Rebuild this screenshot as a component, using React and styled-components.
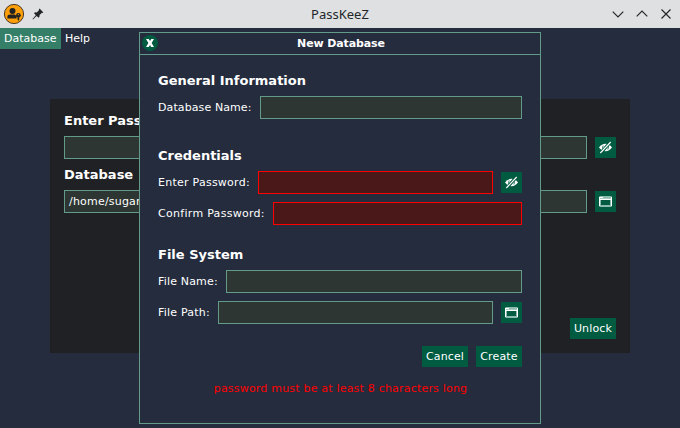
import React from "react";
import styled, { createGlobalStyle } from "styled-components";

const GlobalStyle = createGlobalStyle`
  * { box-sizing: border-box; }
  body {
    margin: 0;
    background: #242c3e;
    color: #fff;
    font: 11px/13px "DejaVu Sans", Verdana, sans-serif;
    overflow: hidden;
  }
`;

const Window = styled.div`
  position: relative;
  display: flex;
  flex-direction: column;
  width: 680px;
  height: 428px;
  background: #242c3e;
`;

const TitleBar = styled.header`
  display: grid;
  grid-template-columns: 1fr auto 1fr;
  align-items: center;
  height: 28px;
  padding: 0 7px 0 3px;
  background: #dee0e2;
  color: #232629;
`;

const TitleText = styled.span`
  margin-left: 4px;
  font: 13px/16px "Noto Sans", sans-serif;
`;

const TitleLeft = styled.div`
  display: flex;
  align-items: center;
  gap: 7px;
`;

const WindowControls = styled.div`
  display: flex;
  justify-content: flex-end;
  gap: 10px;
`;

const Icon = styled.svg`
  display: block;
  flex: none;
  width: ${(p) => p.$w}px;
  height: ${(p) => p.$h || p.$w}px;
`;

const MenuBar = styled.nav`
  display: flex;
  height: 21px;
`;

const MenuItem = styled.div`
  height: 21px;
  padding: 4px;
  white-space: nowrap;
  background: ${(p) => (p.$active ? "#357f69" : "transparent")};

  &:first-child { width: 61px; }
`;

const Panel = styled.main`
  display: flex;
  flex-direction: column;
  width: 580px;
  height: 254px;
  margin: 50px auto 0;
  padding: 14px 14px 14px;
  background: #202124;
`;

const Heading = styled.h2`
  margin: 0;
  height: 16px;
  font-size: 13px;
  line-height: 16px;
  font-weight: bold;
  white-space: nowrap;
`;

const Row = styled.div`
  display: flex;
  align-items: center;
  gap: 8px;
  height: 23px;
  margin-top: ${(p) => p.$top || 0}px;
  margin-bottom: ${(p) => p.$bottom || 0}px;
`;

const Label = styled.label`
  flex: none;
  width: ${(p) => p.$width}px;
  white-space: nowrap;
  letter-spacing: ${(p) => p.$spacing || 0}px;
`;

const Field = styled.div`
  flex: 1;
  height: 23px;
  padding: 4px;
  letter-spacing: 0.2px;
  background: ${(p) => (p.$invalid ? "#4a1818" : "#2d3632")};
  border: 1px solid ${(p) => (p.$invalid ? "#ff0000" : "#639b8a")};
`;

const Button = styled.button`
  width: 46px;
  height: 21px;
  padding: 0;
  border: 0;
  background: #005b41;
  color: #fff;
  font: inherit;
  letter-spacing: 0.15px;
  white-space: nowrap;
`;

const IconButton = styled(Button)`
  display: flex;
  align-items: center;
  justify-content: center;
  flex: none;
  width: 21px;
`;

const PanelFooter = styled.footer`
  display: flex;
  justify-content: flex-end;
  margin-top: auto;
`;

const Dialog = styled.section`
  position: absolute;
  left: 139px;
  top: 32px;
  display: flex;
  flex-direction: column;
  width: 402px;
  height: 392px;
  border: 1px solid #639b8a;
  background: #242c3e;
`;

const DialogTitle = styled.header`
  display: grid;
  grid-template-columns: 16px 1fr 16px;
  align-items: start;
  height: 22px;
  padding: 2px 0 0 2px;
  border-bottom: 1px solid #639b8a;
  font-weight: bold;
  line-height: 17px;
  text-align: center;
  letter-spacing: -0.12px;
`;

const DialogBody = styled.div`
  display: flex;
  flex-direction: column;
  padding: 18px 18px 0;
`;

const Actions = styled.div`
  display: flex;
  justify-content: flex-end;
  gap: 8px;
  margin-top: 22px;
`;

const ErrorText = styled.p`
  margin: 15px 0 0 1px;
  color: #ff0000;
  text-align: center;
  white-space: nowrap;
  letter-spacing: 0.2px;
`;

const EyeOff = () => (
  <Icon $w={15} $h={13} viewBox="0 0 15 13">
    <path d="M1 6.5 Q3.7 2.8 7.5 2.8 T14 6.5 Q11.3 10.2 7.5 10.2 T1 6.5Z" fill="#fff" />
    <path d="M5.2 4.5 Q3.8 6.5 5.2 8.5 M9.8 4.5 Q11.2 6.5 9.8 8.5" fill="none" stroke="#005b41" strokeWidth="0.8" />
    <path d="M2.6 12 L12.4 1.2" stroke="#005b41" strokeWidth="3.2" />
    <path d="M2.3 12 L12.7 1" stroke="#fff" strokeWidth="1.1" />
  </Icon>
);

const Folder = () => (
  <Icon $w={13} $h={11} viewBox="0 0 13 11">
    <path d="M1 0H12L13 1V10L12 11H1L0 10V1Z" fill="#8dbbad" />
    <path d="M0 1H1V10H0ZM12 1H13V10H12Z" fill="#fff" />
    <path d="M1 1H4V2H1Z" fill="#fff" />
    <path d="M1 2H12V3H1Z" fill="#a9cbc0" />
    <path d="M1 3H12V4H1Z" fill="#fff" />
    <path d="M2 4H11V9H2Z" fill="#005b41" />
  </Icon>
);

const CloseBadge = () => (
  <Icon $w={16} viewBox="0 0 16 16">
    <circle cx="8" cy="8" r="8" fill="#005b41" />
    <path d="M4 4H6.8L8 6.1L9.2 4H12L9.6 8L12 12H9.2L8 9.9L6.8 12H4L6.4 8Z" fill="#fff" />
  </Icon>
);

const AppLogo = () => (
  <Icon $w={22} viewBox="0 0 22 22">
    <circle cx="11" cy="11" r="9.6" fill="#ff9f0a" stroke="#4b3920" strokeWidth="1" />
    <circle cx="9.5" cy="7.9" r="3" fill="#222" />
    <path d="M4.4 15.5V13.8Q4.4 11.4 7 11.4H12L13.6 13.2V15.5Z" fill="#222" />
    <circle cx="15.4" cy="12.2" r="2.3" fill="#222" />
    <path d="M14.6 12.5H16.2V17L15.4 17.8L14.6 17Z" fill="#222" />
    <circle cx="15.4" cy="11.6" r="0.6" fill="#ff9f0a" />
  </Icon>
);

const Pin = () => (
  <Icon $w={12} viewBox="0 0 12 12">
    <path d="M7.6 0.6 L11.4 4.4 L10.4 5 L9.9 4.8 L7.6 7.1 Q7.8 8.7 6.8 9.8 L4.5 7.9 L1 11.4 L0.5 11.1 L3.8 7.2 L1.9 5.1 Q3.1 4.1 4.8 4.4 L7.1 2.1 L6.9 1.5Z" fill="#232629" />
  </Icon>
);

const ControlIcon = ({ d }) => (
  <Icon $w={14} viewBox="0 0 14 14">
    <path d={d} fill="none" stroke="#232629" strokeWidth="1.15" />
  </Icon>
);

export default function App() {
  return (
    <Window>
      <GlobalStyle />
      <TitleBar>
        <TitleLeft>
          <AppLogo />
          <Pin />
        </TitleLeft>
        <TitleText>PassKeeZ</TitleText>
        <WindowControls>
          <ControlIcon d="M1.7 4.7 L7 10 L12.3 4.7" />
          <ControlIcon d="M1.7 9.3 L7 4 L12.3 9.3" />
          <ControlIcon d="M2.5 2.5 L11.5 11.5 M11.5 2.5 L2.5 11.5" />
        </WindowControls>
      </TitleBar>
      <MenuBar>
        <MenuItem $active>Database</MenuItem>
        <MenuItem>Help</MenuItem>
      </MenuBar>
      <Panel>
        <Heading>Enter Password</Heading>
        <Row $top={7} $bottom={8}>
          <Field />
          <IconButton><EyeOff /></IconButton>
        </Row>
        <Heading>Database</Heading>
        <Row $top={7}>
          <Field>/home/sugar</Field>
          <IconButton><Folder /></IconButton>
        </Row>
        <PanelFooter>
          <Button>Unlock</Button>
        </PanelFooter>
      </Panel>
      <Dialog>
        <DialogTitle>
          <CloseBadge />
          <span>New Database</span>
        </DialogTitle>
        <DialogBody>
          <Heading>General Information</Heading>
          <Row $top={7} $bottom={29}>
            <Label $width={94} $spacing={0.1}>Database Name:</Label>
            <Field />
          </Row>
          <Heading>Credentials</Heading>
          <Row $top={7} $bottom={8}>
            <Label $width={92} $spacing={0.25}>Enter Password:</Label>
            <Field $invalid />
            <IconButton><EyeOff /></IconButton>
          </Row>
          <Row $bottom={22}>
            <Label $width={107} $spacing={0.29}>Confirm Password:</Label>
            <Field $invalid />
          </Row>
          <Heading>File System</Heading>
          <Row $top={7} $bottom={8}>
            <Label $width={60} $spacing={0.17}>File Name:</Label>
            <Field />
          </Row>
          <Row>
            <Label $width={52} $spacing={0.22}>File Path:</Label>
            <Field />
            <IconButton><Folder /></IconButton>
          </Row>
          <Actions>
            <Button>Cancel</Button>
            <Button>Create</Button>
          </Actions>
          <ErrorText>password must be at least 8 characters long</ErrorText>
        </DialogBody>
      </Dialog>
    </Window>
  );
}
